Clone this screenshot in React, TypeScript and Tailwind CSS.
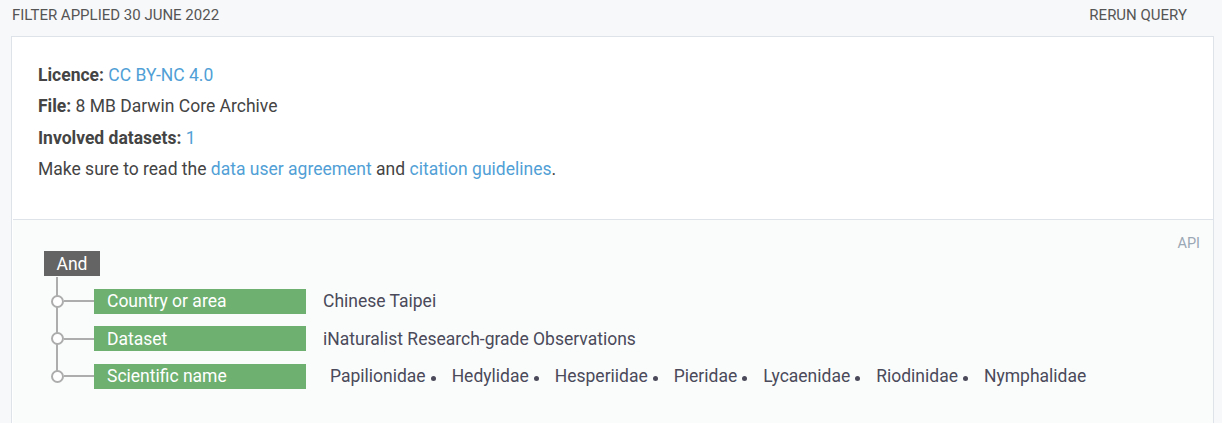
const rows = [
  { label: "Country or area", values: ["Chinese Taipei"] },
  { label: "Dataset", values: ["iNaturalist Research-grade Observations"] },
  {
    label: "Scientific name",
    values: [
      "Papilionidae",
      "Hedylidae",
      "Hesperiidae",
      "Pieridae",
      "Lycaenidae",
      "Riodinidae",
      "Nymphalidae",
    ],
  },
];

const App = () => {
  return (
    <div className="min-h-[423px] bg-[#f7f8f9] text-[#444] font-['Roboto',sans-serif]">
      {/* Header */}
      <div className="flex items-center justify-between h-[30px] pl-[12px] pr-[35px] mb-[6px] text-[15px] text-[#555]">
        <span>FILTER APPLIED 30 JUNE 2022</span>
        <span>RERUN QUERY</span>
      </div>

      {/* Card */}
      <div className="ml-[11px] mr-[8px] border border-b-2 border-[#dde3e8] bg-white">
        {/* Summary */}
        <div className="pt-[23px] pb-[34px] px-[26px] text-[17.5px] leading-[31.3px] text-[#444]">
          <p>
            <span className="font-bold">Licence:</span>{" "}
            <a className="text-[#519fd6]">CC BY-NC 4.0</a>
          </p>
          <p>
            <span className="font-bold">File:</span> 8 MB Darwin Core Archive
          </p>
          <p>
            <span className="font-bold">Involved datasets:</span>{" "}
            <a className="text-[#519fd6]">1</a>
          </p>
          <p>
            Make sure to read the{" "}
            <a className="text-[#519fd6]">data user agreement</a> and{" "}
            <a className="text-[#519fd6]">citation guidelines</a>.
          </p>
        </div>

        {/* Query tree */}
        <div className="relative border-t border-[#dde3e8] ml-[1px] bg-[#fafcfc] pt-[31px] pb-[30px] pl-[31px]">
          <span className="absolute top-[13px] right-[13px] text-[14.5px] text-[#9aa7b4]">API</span>

          <div className="inline-flex items-center justify-center w-[56px] h-[25px] bg-[#646464] text-white text-[17.5px]">
            And
          </div>

          <div className="relative pt-[6px]">
            <div className="absolute left-[12px] top-0 bottom-[18.75px] w-[2px] bg-[#adadad]" />
            {rows.map((row) => (
              <div key={row.label} className="flex items-center h-[37.5px]">
                <div className="relative flex items-center w-[50px] h-full">
                  <div className="w-[7px]" />
                  <div className="relative z-10 w-[13px] h-[13px] rounded-full border-2 border-[#adadad] bg-white" />
                  <div className="flex-1 h-[2px] bg-[#adadad]" />
                </div>
                <div className="flex items-center w-[212px] h-[25px] pl-[13px] bg-[#6eb070] text-white text-[17.5px]">
                  {row.label}
                </div>
                <div
                  className={
                    row.values.length > 1
                      ? "flex items-center ml-[24px] text-[17.5px] text-[#4a4a5a]"
                      : "flex items-center ml-[17px] text-[17.5px] text-[#4a4a5a]"
                  }
                >
                  {row.values.map((v, i) => (
                    <span key={v} className="flex items-center">
                      {v}
                      {i < row.values.length - 1 && (
                        <span className="ml-[5px] mr-[16px] mt-[4px] w-[5px] h-[5px] rounded-full bg-[#4a4a5a]" />
                      )}
                    </span>
                  ))}
                </div>
              </div>
            ))}
          </div>
        </div>
      </div>
    </div>
  );
};

export default App;
